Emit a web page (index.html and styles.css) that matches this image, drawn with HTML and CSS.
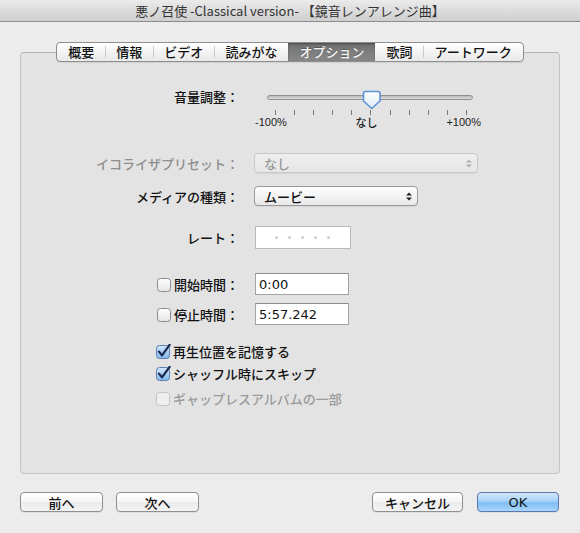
FILE: index.html
```html
<!DOCTYPE html>
<html lang="ja">
<head>
<meta charset="utf-8">
<title>Options</title>
<link rel="stylesheet" href="styles.css">
</head>
<body>
<div class="window">
  <div class="titlebar">悪ノ召使 -Classical version- 【鏡音レンアレンジ曲】</div>
  <div class="content">
    <div class="tabs-wrap">
      <div class="tabs">
        <div class="tab">概要</div>
        <div class="tab sep">情報</div>
        <div class="tab sep">ビデオ</div>
        <div class="tab sep">読みがな</div>
        <div class="tab selected">オプション</div>
        <div class="tab">歌詞</div>
        <div class="tab sep">アートワーク</div>
      </div>
    </div>
    <div class="panel">
      <div class="row slider-row">
        <div class="label">音量調整：</div>
        <div class="slider">
          <div class="track-area">
            <div class="track"></div>
            <svg class="thumb" width="20" height="20" viewBox="0 0 20 20">
              <defs>
                <linearGradient id="tg" x1="0" y1="0" x2="0" y2="1">
                  <stop offset="0" stop-color="#ffffff"/>
                  <stop offset="1" stop-color="#dfe9f5"/>
                </linearGradient>
              </defs>
              <path d="M1.5 3.5 Q1.5 1.5 3.5 1.5 L16 1.5 Q18 1.5 18 3.5 L18 11 L9.75 18.5 L1.5 11 Z" fill="url(#tg)" stroke="#5b93d6" stroke-width="1.6" stroke-linejoin="round"/>
            </svg>
          </div>
          <div class="ticks">
            <span></span><span></span><span></span><span></span><span></span><span></span><span></span><span></span><span></span><span></span><span></span>
          </div>
          <div class="tick-labels"><span>-100%</span><span class="jp">なし</span><span>+100%</span></div>
        </div>
      </div>

      <div class="row eq-row">
        <div class="label disabled">イコライザプリセット：</div>
        <div class="popup popup-eq disabled">
          <span>なし</span>
          <svg width="6" height="9" viewBox="0 0 6 9"><path d="M0 3.6 L3 0.4 L6 3.6 Z M0 5.4 L3 8.6 L6 5.4 Z" fill="#b0b0b0"/></svg>
        </div>
      </div>

      <div class="row media-row">
        <div class="label">メディアの種類：</div>
        <div class="popup popup-media">
          <span>ムービー</span>
          <svg width="6" height="9" viewBox="0 0 6 9"><path d="M0 3.6 L3 0.4 L6 3.6 Z M0 5.4 L3 8.6 L6 5.4 Z" fill="#222"/></svg>
        </div>
      </div>

      <div class="row rate-row">
        <div class="label">レート：</div>
        <div class="field field-rate"><span class="dots">・・・・・</span></div>
      </div>

      <div class="row start-row">
        <div class="label label-check">
          <svg class="cb" width="15" height="15" viewBox="0 0 15 15">
            <defs>
              <linearGradient id="cbw" x1="0" y1="0" x2="0" y2="1">
                <stop offset="0" stop-color="#ffffff"/>
                <stop offset="1" stop-color="#e4e4e4"/>
              </linearGradient>
            </defs>
            <rect x="0.5" y="1.5" width="13" height="13" rx="3" fill="url(#cbw)" stroke="#8a8a8a"/>
          </svg>
          <span>開始時間：</span>
        </div>
        <div class="field field-time">0:00</div>
      </div>

      <div class="row stop-row">
        <div class="label label-check">
          <svg class="cb" width="15" height="15" viewBox="0 0 15 15">
            <rect x="0.5" y="1.5" width="13" height="13" rx="3" fill="url(#cbw)" stroke="#8a8a8a"/>
          </svg>
          <span>停止時間：</span>
        </div>
        <div class="field field-time">5:57.242</div>
      </div>

      <div class="check-row first">
        <svg class="cb" width="15" height="15" viewBox="0 0 15 15">
          <defs>
            <linearGradient id="cbb" x1="0" y1="0" x2="0" y2="1">
              <stop offset="0" stop-color="#d3e8fb"/>
              <stop offset="1" stop-color="#84b8ec"/>
            </linearGradient>
          </defs>
          <rect x="0.5" y="1.5" width="13" height="13" rx="3" fill="url(#cbb)" stroke="#5f7fae"/>
          <path d="M3 7.6 L6 11.4 L13.6 0.8" fill="none" stroke="#1b2c52" stroke-width="2.3" stroke-linecap="round" stroke-linejoin="round"/>
        </svg>
        <span>再生位置を記憶する</span>
      </div>
      <div class="check-row second">
        <svg class="cb" width="15" height="15" viewBox="0 0 15 15">
          <rect x="0.5" y="1.5" width="13" height="13" rx="3" fill="url(#cbb)" stroke="#5f7fae"/>
          <path d="M3 7.6 L6 11.4 L13.6 0.8" fill="none" stroke="#1b2c52" stroke-width="2.3" stroke-linecap="round" stroke-linejoin="round"/>
        </svg>
        <span>シャッフル時にスキップ</span>
      </div>
      <div class="check-row third disabled">
        <svg class="cb" width="15" height="15" viewBox="0 0 15 15">
          <rect x="0.5" y="1.5" width="13" height="13" rx="3" fill="#efefef" stroke="#c3c3c3"/>
        </svg>
        <span>ギャップレスアルバムの一部</span>
      </div>
    </div>

    <div class="footer">
      <div class="group">
        <div class="btn btn-nav">前へ</div>
        <div class="btn btn-nav">次へ</div>
      </div>
      <div class="group right">
        <div class="btn btn-cancel">キャンセル</div>
        <div class="btn btn-ok">OK</div>
      </div>
    </div>
  </div>
</div>
</body>
</html>
```

FILE: styles.css
```css
html, body {
  margin: 0;
  padding: 0;
}
body {
  width: 580px;
  height: 533px;
  overflow: hidden;
  background: #ececec;
  font-family: "DejaVu Sans", "Noto Sans CJK JP", sans-serif;
  font-size: 13px;
  font-weight: 500;
  color: #111;
}
.window {
  width: 580px;
  height: 533px;
}
.titlebar {
  height: 21px;
  line-height: 21px;
  border-bottom: 1px solid #8c8c8c;
  background: linear-gradient(#ebebeb, #d9d9d9 60%, #cfcfcf);
  text-align: center;
  font-size: 13px;
  font-weight: 400;
  color: #333;
  font-family: "Noto Sans CJK JP", sans-serif;
}
.content {
  padding: 20px 0 0 0;
}
.tabs-wrap {
  display: flex;
  justify-content: center;
  position: relative;
  z-index: 1;
  margin-bottom: -10px;
}
.tabs {
  display: flex;
  height: 18px;
  border: 1px solid #8e8e8e;
  border-radius: 4px;
  overflow: hidden;
  background: linear-gradient(#ffffff, #f3f3f3 50%, #e9e9e9);
  box-shadow: 0 1px 1px rgba(0,0,0,0.08);
}
.tab {
  position: relative;
  padding: 0 11px;
  line-height: 18px;
  font-family: "Noto Sans CJK JP", sans-serif;
  font-size: 13px;
  color: #111;
}
.tab.sep::before {
  content: "";
  position: absolute;
  left: 0;
  top: 3px;
  bottom: 3px;
  width: 1px;
  background: #cbcbcb;
}
.tab.selected {
  background: linear-gradient(#6b6b6b, #7b7b7b 40%, #878787);
  color: #f4f4f4;
  box-shadow: inset 0 1px 2px rgba(0,0,0,0.35);
  text-shadow: 0 -1px 0 rgba(0,0,0,0.25);
}
.panel {
  margin-left: 20px;
  width: 540px;
  height: 422px;
  box-sizing: border-box;
  border: 1px solid #c4c4c4;
  border-top-color: #b4b4b4;
  border-radius: 4px;
  background: #e3e3e3;
  padding-top: 34px;
}
.row {
  display: flex;
  align-items: center;
}
.label {
  width: 218px;
  margin-right: 15px;
  flex-shrink: 0;
  text-align: right;
  font-family: "Noto Sans CJK JP", sans-serif;
  color: #111;
}
.label.disabled {
  color: #8e8e8e;
}
.slider-row {
  align-items: flex-start;
}
.slider-row .label {
  line-height: 20px;
}
.slider {
  width: 227px;
}
.track-area {
  position: relative;
  margin-left: 14px;
  width: 205px;
  height: 20px;
  display: flex;
  align-items: center;
}
.track {
  width: 205px;
  height: 3px;
  border: 1px solid #8f8f8f;
  box-sizing: content-box;
  margin-left: -1px;
  border-radius: 3px;
  background: linear-gradient(#b9b9b9, #dedede);
}
.thumb {
  position: absolute;
  left: 94px;
  top: 3px;
}
.ticks {
  margin: 3px 0 0 14px;
  width: 205px;
  height: 5px;
  padding: 0 6px 0 7px;
  box-sizing: border-box;
  display: flex;
  justify-content: space-between;
}
.ticks span {
  width: 1px;
  height: 5px;
  background: #7a7a7a;
}
.tick-labels {
  margin: 1px 0 0 1px;
  width: 226px;
  height: 13px;
  display: flex;
  justify-content: space-between;
  font-family: "Liberation Sans", "Noto Sans CJK JP", sans-serif;
  font-size: 11px;
  line-height: 13px;
  color: #222;
}
.tick-labels .jp {
  font-family: "Noto Sans CJK JP", sans-serif;
}
.eq-row {
  margin-top: 24px;
}
.media-row {
  margin-top: 13px;
}
.popup {
  height: 20px;
  box-sizing: border-box;
  border: 1px solid #999;
  border-radius: 4px;
  background: linear-gradient(#ffffff, #f4f4f4 50%, #e8e8e8);
  display: flex;
  align-items: center;
  justify-content: space-between;
  padding: 0 5px 0 9px;
  font-family: "Noto Sans CJK JP", sans-serif;
  box-shadow: 0 1px 0 rgba(0,0,0,0.05);
}
.popup-eq {
  width: 224px;
}
.popup-eq.disabled {
  border-color: #c8c8c8;
  background: linear-gradient(#eeeeee, #e7e7e7);
  color: #999;
}
.popup-media {
  width: 164px;
}
.rate-row {
  margin-top: 20px;
}
.field {
  height: 22px;
  box-sizing: border-box;
  border: 1px solid #a3a3a3;
  border-top-color: #8d8d8d;
  background: #fff;
  display: flex;
  align-items: center;
  padding: 0 3px;
  margin-left: 1px;
  color: #111;
}
.field-rate {
  width: 96px;
  height: 23px;
  border-color: #b9b9b9;
  justify-content: center;
}
.dots {
  font-family: "Noto Sans CJK JP", sans-serif;
  color: #c6c6c6;
  font-size: 12px;
  letter-spacing: 1px;
}
.field-time {
  width: 94px;
  font-family: "DejaVu Sans", sans-serif;
  font-size: 13px;
}
.start-row {
  margin-top: 24px;
}
.stop-row {
  margin-top: 8px;
}
.label-check {
  display: flex;
  align-items: center;
  justify-content: flex-end;
  gap: 2px;
}
.cb {
  flex-shrink: 0;
  display: block;
}
.check-row {
  display: flex;
  align-items: center;
  gap: 2px;
  height: 18px;
  padding-left: 135px;
  font-family: "Noto Sans CJK JP", sans-serif;
  color: #111;
}
.check-row.first {
  margin-top: 17px;
}
.check-row.second {
  margin-top: 4px;
}
.check-row.third {
  margin-top: 7px;
}
.check-row.disabled {
  color: #9a9a9a;
}
.footer {
  margin-top: 18px;
  padding: 0 21px 0 20px;
  display: flex;
  justify-content: space-between;
}
.group {
  display: flex;
  gap: 13px;
}
.group.right {
  gap: 14px;
}
.btn {
  height: 20px;
  box-sizing: border-box;
  border: 1px solid #8f8f8f;
  border-radius: 4px;
  background: linear-gradient(#ffffff, #f6f6f6 50%, #ebebeb 51%, #f3f3f3);
  display: flex;
  align-items: center;
  justify-content: center;
  font-family: "Noto Sans CJK JP", sans-serif;
  font-size: 13px;
  color: #111;
  box-shadow: 0 1px 0 rgba(0,0,0,0.06);
}
.btn-nav {
  width: 83px;
}
.btn-cancel {
  width: 91px;
}
.btn-ok {
  width: 82px;
  border-color: #5a78ad;
  background: linear-gradient(#d2e8fb, #a7d2f8 45%, #7fbdf4 55%, #a9d6fb);
  font-family: "DejaVu Sans", sans-serif;
}
```
